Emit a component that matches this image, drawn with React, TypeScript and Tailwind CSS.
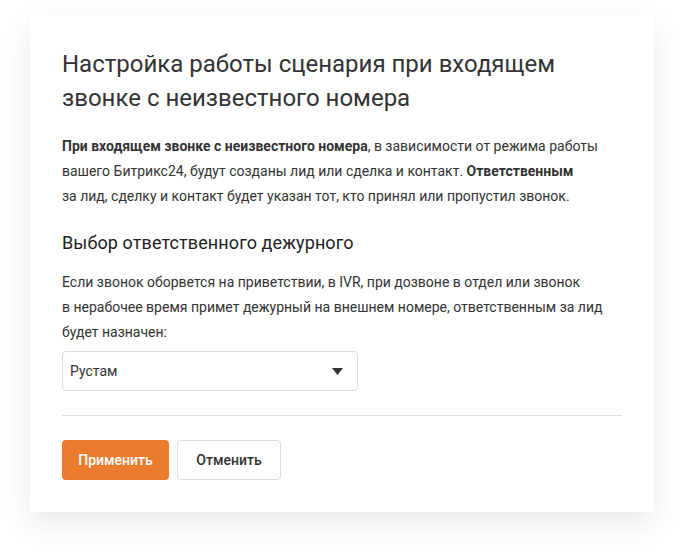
export default function App() {
  return (
    <div className="min-h-screen bg-white pt-[15px] pl-[30px] font-['Roboto',sans-serif] text-[#333]">
      <div className="w-[624px] h-[497px] bg-white px-8 pt-8 pb-8 shadow-[0_12px_30px_rgba(0,0,0,0.09)]">
        <h1 className="text-[24px] leading-[34px] text-[#333]">
          Настройка работы сценария при входящем
          <br />
          звонке с неизвестного номера
        </h1>

        <p className="mt-[19px] text-[14px] leading-[25px]">
          <b className="font-bold">При входящем звонке с неизвестного номера</b>, в зависимости от режима работы
          <br />
          вашего Битрикс24, будут созданы лид или сделка и контакт. <b className="font-bold">Ответственным</b>
          <br />
          за лид, сделку и контакт будет указан тот, кто принял или пропустил звонок.
        </p>

        <h2 className="mt-[22px] text-[18px] leading-[24px] font-normal tracking-[0.1px] text-[#222]">
          Выбор ответственного дежурного
        </h2>

        <p className="mt-[15px] text-[14px] leading-[25px]">
          Если звонок оборвется на приветствии, в IVR, при дозвоне в отдел или звонок
          <br />
          в нерабочее время примет дежурный на внешнем номере, ответственным за лид
          <br />
          будет назначен:
        </p>

        <div className="mt-[6px] w-[296px] h-10 border border-[#dcdcdc] rounded-[4px] flex items-center justify-between pl-[7px] pr-[14px] text-[14px]">
          <span>Рустам</span>
          <svg width="11" height="7" viewBox="0 0 11 7">
            <path d="M0 0h11L5.5 7z" fill="#333" />
          </svg>
        </div>

        <div className="mt-6 h-px bg-[#e0e0e0]" />

        <div className="mt-6 flex gap-2">
          <button className="h-10 w-[107px] rounded-[4px] bg-[#eb7b2e] text-white text-[14px] font-medium">
            Применить
          </button>
          <button className="h-10 w-[104px] rounded-[4px] border border-[#dcdcdc] bg-white text-[#333] text-[14px] font-medium">
            Отменить
          </button>
        </div>
      </div>
    </div>
  );
}
